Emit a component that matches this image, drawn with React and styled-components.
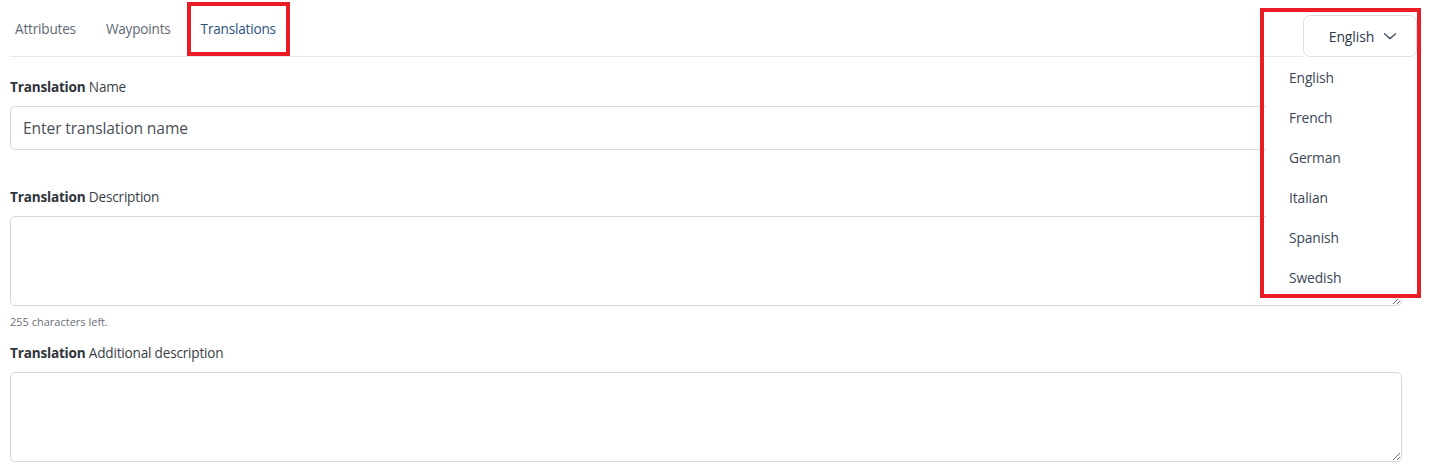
import styled, { createGlobalStyle } from "styled-components";

const GlobalStyle = createGlobalStyle`
  body {
    margin: 0;
    background: #fff;
    font-family: "Open Sans", "Liberation Sans", sans-serif;
    color: #3d4550;
  }
`;

const LANGUAGES = ["English", "French", "German", "Italian", "Spanish", "Swedish"];

const Chevron = () => (
  <svg width="14" height="14" viewBox="0 0 14 14" fill="none">
    <path d="M1.5 4.8 L7 9.6 L12.5 4.8" stroke="#4a5568" strokeWidth="1.4" strokeLinecap="round" strokeLinejoin="round" />
  </svg>
);

export default () => (
  <>
    <GlobalStyle />
    <Page>
      <Header>
        <Tabs>
          <Tab>Attributes</Tab>
          <Tab>Waypoints</Tab>
          <Tab $active>
            Translations
            <Marker $inset="2px 1px 0 1px" />
          </Tab>
        </Tabs>
        <LangSelect>
          <SelectButton>
            English <Chevron />
          </SelectButton>
          <Menu>
            {LANGUAGES.map((l) => (
              <MenuItem key={l}>{l}</MenuItem>
            ))}
          </Menu>
          <Marker $inset="8px -4px -241px -43px" />
        </LangSelect>
      </Header>

      <Form>
        <Field>
          <Label>
            <b>Translation</b> Name
          </Label>
          <Input placeholder="Enter translation name" />
        </Field>
        <Field $gap={37}>
          <Label>
            <b>Translation</b> Description
          </Label>
          <TextArea />
          <Hint>255 characters left.</Hint>
        </Field>
        <Field $gap={13}>
          <Label>
            <b>Translation</b> Additional description
          </Label>
          <TextArea />
        </Field>
      </Form>
    </Page>
  </>
);

const Page = styled.div`
  width: 1431px;
  height: 467px;
  overflow: hidden;
  box-sizing: border-box;
`;

const Header = styled.div`
  display: flex;
  align-items: flex-end;
  padding: 0 14px 0 10px;
  height: 57px;
`;

const Tabs = styled.div`
  flex: 1;
  display: flex;
  align-items: stretch;
  height: 56px;
  border-bottom: 1px solid #e6e8ec;
`;

const Tab = styled.div`
  position: relative;
  display: flex;
  align-items: center;
  padding: 0 15px;
  font-size: 13.6px;
  letter-spacing: -0.2px;
  color: ${(p) => (p.$active ? "#2c5281" : "#5f6874")};
  &:first-child {
    margin-left: -10px;
  }
`;

const Marker = styled.div`
  position: absolute;
  inset: ${(p) => p.$inset};
  border: 4px solid #ea1c26;
  pointer-events: none;
  z-index: 5;
`;

const LangSelect = styled.div`
  position: relative;
  align-self: stretch;
  display: flex;
  align-items: flex-end;
  padding-top: 15px;
  box-sizing: border-box;
`;

const SelectButton = styled.div`
  display: flex;
  align-items: center;
  justify-content: center;
  gap: 9px;
  width: 114px;
  height: 42px;
  box-sizing: border-box;
  border: 1px solid #dde1e7;
  border-radius: 7px;
  font-size: 14px;
  letter-spacing: -0.1px;
  color: #2d3a4b;
  background: #fff;
  padding-left: 6px;
`;

const Menu = styled.div`
  position: absolute;
  top: 57px;
  right: 0;
  width: 151px;
  padding: 0 0 2px;
  background: #fff;
  z-index: 4;
`;

const MenuItem = styled.div`
  height: 40px;
  display: flex;
  align-items: center;
  padding-left: 23px;
  font-size: 13.8px;
  letter-spacing: -0.1px;
  color: #3a4656;
`;

const Form = styled.div`
  padding: 20px 29px 0 10px;
`;

const Field = styled.div`
  display: flex;
  flex-direction: column;
  margin-top: ${(p) => p.$gap || 0}px;
`;

const Label = styled.label`
  font-size: 13.6px;
  letter-spacing: -0.2px;
  line-height: 20px;
  color: #3a3f47;
  margin-bottom: 9px;
  b {
    font-weight: 700;
    color: #2f343b;
  }
`;

const Input = styled.input`
  height: 44px;
  box-sizing: border-box;
  border: 1px solid #d3d7de;
  border-radius: 5px;
  padding: 0 12px;
  font-family: inherit;
  font-size: 15.6px;
  letter-spacing: -0.1px;
  color: #333;
  outline: none;
  &::placeholder {
    color: #4a4f57;
  }
`;

const TextArea = styled.textarea`
  height: 90px;
  box-sizing: border-box;
  border: 1px solid #d3d7de;
  border-radius: 5px;
  padding: 8px 12px;
  font-family: inherit;
  font-size: 14px;
  outline: none;
  resize: vertical;
`;

const Hint = styled.div`
  font-size: 11px;
  line-height: 16px;
  margin-top: 8px;
  color: #6b7079;
`;
